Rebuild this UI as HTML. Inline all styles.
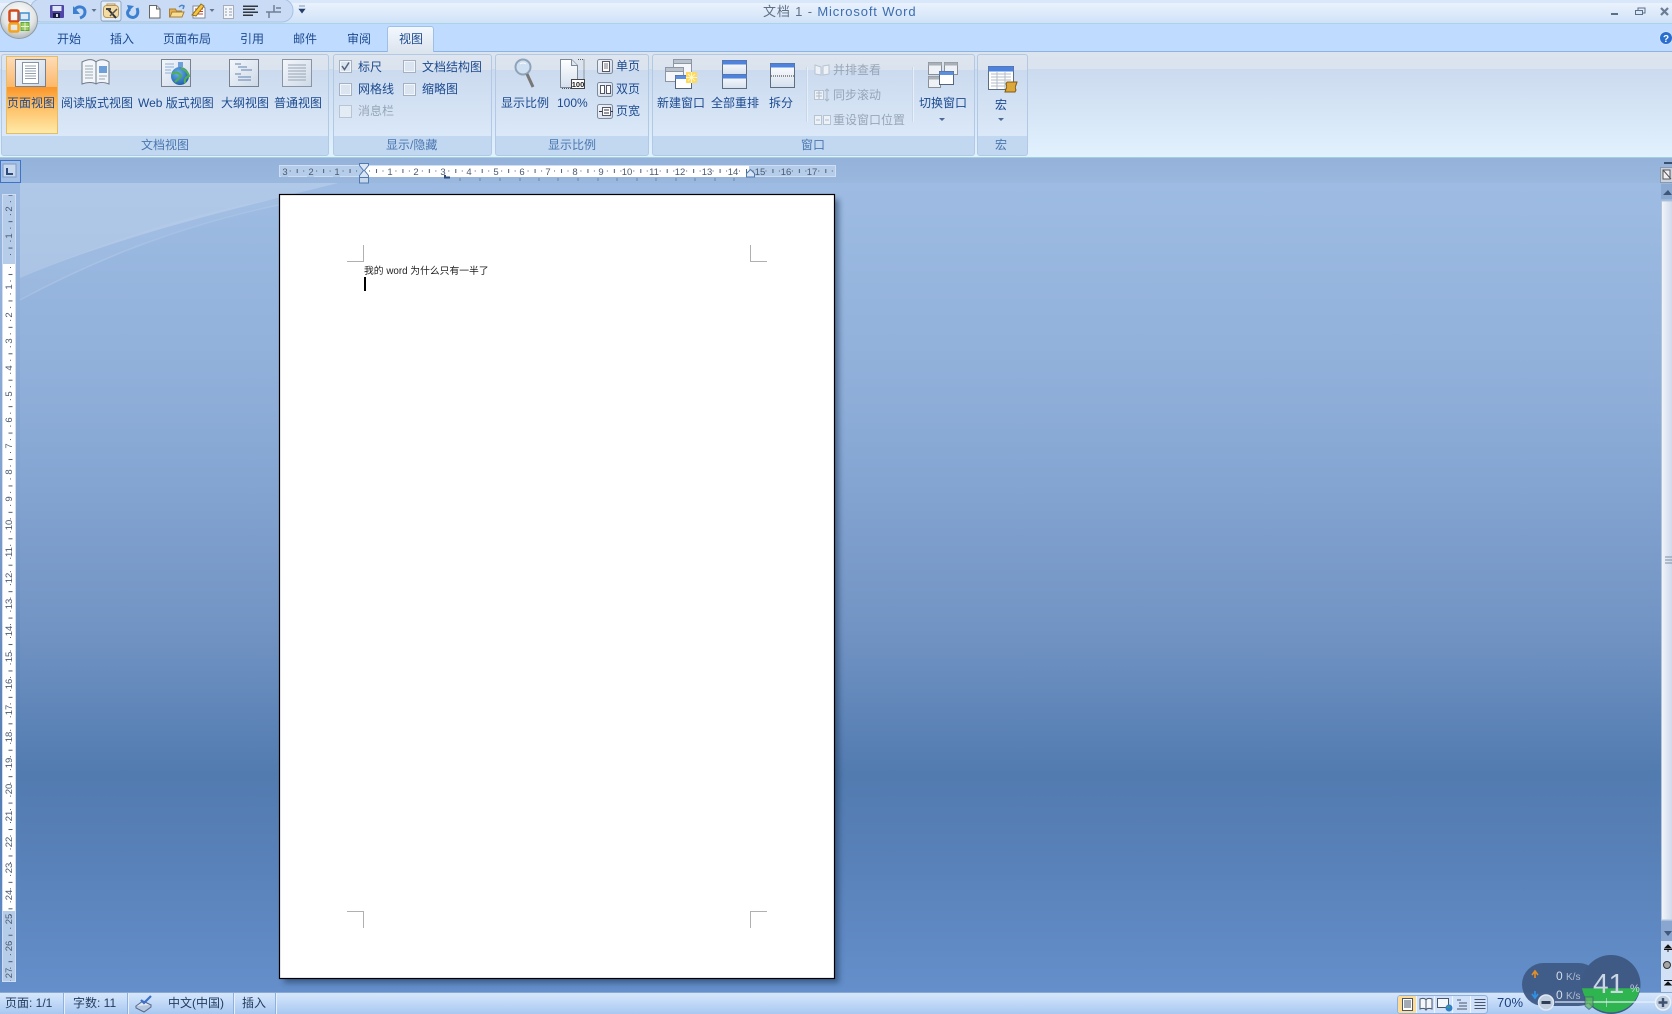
<!DOCTYPE html>
<html><head><meta charset="utf-8"><title>文档 1 - Microsoft Word</title>
<style>
html,body{margin:0;padding:0;width:1672px;height:1014px;overflow:hidden;background:#6a92c8}
div,span{position:absolute}
.t{white-space:nowrap;font:12px/14px "Liberation Sans","Noto Sans CJK SC",sans-serif;color:#1c4a90}
.g{color:#4a76b0}
.d{color:#97a5b8}
.grp{top:54px;height:100px;border:1px solid #b1c9e4;border-radius:3px;box-sizing:content-box;background:linear-gradient(#dee5ef 0,#dae3ee 15px,#cbdaee 15px,#dae8f8 81px,#c2d8f1 81px,#c2d8f1 100px)}
.s{color:#1f3a5c}
svg{position:absolute;left:0;top:0}
</style></head><body>
<div style="left:0;top:0;width:1672px;height:3px;background:#d8e7fa"></div>
<div style="left:0;top:3px;width:1672px;height:20px;background:linear-gradient(#eaf2fc,#d0e2f8)"></div>
<div style="left:0;top:23px;width:1672px;height:1px;background:#a9d3e6"></div>
<div style="left:0;top:24px;width:1672px;height:27px;background:#bfdbff"></div>
<div style="left:0;top:51px;width:1672px;height:1px;background:#8db2e3"></div>
<div style="left:0;top:52px;width:1672px;height:105px;background:linear-gradient(#dce4ee 0,#dae3ee 17px,#cbdaee 17px,#e2f1fe 100%)"></div>
<div style="left:0;top:157px;width:1672px;height:1px;background:#9fd0dc"></div>
<div style="left:0;top:158px;width:1672px;height:25px;background:linear-gradient(#94b2da,#9ab8de)"></div>
<div style="left:0;top:183px;width:1672px;height:809px;background:linear-gradient(#9ebce3 0,#8dadd8 28%,#7294c4 55%,#527bb0 73%,#5a82ba 85%,#648fca 100%)"></div>
<div style="left:0;top:183px;width:20px;height:809px;background:linear-gradient(#9bb9e0 0,#7f9fcd 40%,#527bb0 73%,#648fca 100%)"></div>
<div class="grp" style="left:1px;width:326px"></div>
<div class="grp" style="left:333px;width:157px"></div>
<div class="grp" style="left:495px;width:152px"></div>
<div class="grp" style="left:652px;width:321px"></div>
<div class="grp" style="left:977px;width:49px"></div>
<div style="left:6px;top:56px;width:50px;height:76px;border:1px solid #e3bd68;background:linear-gradient(#fddcb8 0,#fdb86a 30px,#fb9529 30px,#fdb759 45px,#ffeaa8 100%)"></div>
<div style="left:387px;top:26px;width:47px;height:26px;box-sizing:border-box;border:1px solid #9ec0e6;border-bottom:0;border-radius:3px 3px 0 0;background:linear-gradient(#f3f8fe,#dce4ee)"></div>
<div style="left:0;top:992px;width:1672px;height:22px;background:linear-gradient(#8aa9d2 0,#8aa9d2 1px,#d6e7fc 1px,#c3daf8 10px,#a8c8f0 100%)"></div>

<svg width="1672" height="1014" viewBox="0 0 1672 1014" xmlns="http://www.w3.org/2000/svg">
<defs>
<radialGradient id="orb" cx=".5" cy=".35" r=".7"><stop offset="0" stop-color="#fff"/><stop offset=".6" stop-color="#e4e6e6"/><stop offset="1" stop-color="#a8aeb0"/></radialGradient>
<linearGradient id="ic" x1="0" y1="0" x2="0" y2="1"><stop offset="0" stop-color="#fff"/><stop offset="1" stop-color="#d5e0ee"/></linearGradient>
<linearGradient id="ic2" x1="0" y1="0" x2="1" y2="1"><stop offset="0" stop-color="#f4f7fb"/><stop offset="1" stop-color="#cdd9e8"/></linearGradient>
<linearGradient id="th" x1="0" y1="0" x2="1" y2="0"><stop offset="0" stop-color="#f3f6fb"/><stop offset="1" stop-color="#cdd9ea"/></linearGradient>
<radialGradient id="globe" cx=".4" cy=".35" r=".7"><stop offset="0" stop-color="#6ab4ee"/><stop offset="1" stop-color="#1c5aa8"/></radialGradient>
<pattern id="rh" patternUnits="userSpaceOnUse" x="363" y="165" width="26.43" height="12"><rect x="6" y="5.5" width="1" height="1" fill="#4a5b74"/><rect x="13" y="4" width="1" height="4" fill="#4a5b74"/><rect x="19.5" y="5.5" width="1" height="1" fill="#4a5b74"/></pattern>
<pattern id="rv" patternUnits="userSpaceOnUse" x="2" y="261" width="13" height="26.43"><rect x="8" y="6" width="1" height="1" fill="#4a5b74"/><rect x="6.5" y="13" width="4" height="1" fill="#4a5b74"/><rect x="8" y="19.5" width="1" height="1" fill="#4a5b74"/></pattern>
<filter id="sh" x="-5%" y="-5%" width="110%" height="110%"><feGaussianBlur stdDeviation="3"/></filter>
</defs>

<!-- background swoosh -->
<path d="M20 183H338C250 205 120 235 20 278Z" fill="#fff" opacity=".2"/>
<path d="M20 278C120 235 200 212 279 198V205C180 222 90 265 20 300Z" fill="#fff" opacity=".05"/>
<path d="M20 300C90 262 180 225 279 205" fill="none" stroke="#fff" stroke-opacity=".12" stroke-width="1.5"/>

<!-- QAT -->
<rect x="30" y="-1" width="263" height="23" rx="11" fill="#cadcf5" stroke="#a7c2e5"/>
<circle cx="19" cy="20" r="18.5" fill="url(#orb)" stroke="#8f9aa3"/>
<rect x="9.500" y="10.500" width="9" height="11" rx="1.500" fill="none" stroke="#d5491a" stroke-width="2.500"/>
<rect x="20" y="13" width="9" height="7" fill="#dfeaf5" stroke="#3f8fd0" stroke-width="1.500"/>
<rect x="9.500" y="23.500" width="9" height="8" rx="1.500" fill="none" stroke="#f4a31c" stroke-width="2.500"/>
<rect x="21" y="22.500" width="8" height="8" fill="#9bcb58" stroke="#5fa53a"/>
<path d="M25 22.500v8M21 26.500h8" stroke="#e8f3da"/>
<!-- save -->
<rect x="50" y="5" width="14" height="13" rx="1" fill="#4f45a8"/><rect x="52.500" y="6" width="9" height="5" fill="#dfe6f5"/><rect x="53" y="13" width="7" height="5" fill="#1b1b3a"/><rect x="56" y="14" width="2" height="3" fill="#cfd6e8"/>
<!-- undo -->
<path d="M75 9C79 5 85 7 85 12C85 15 83 17 80 18" fill="none" stroke="#3b7fd0" stroke-width="3"/><path d="M73 6v8h7z" fill="#3b7fd0"/>
<path d="M91.500 9h5l-2.500 3z" fill="#62758f"/>
<!-- hover tools -->
<rect x="101" y="1" width="20" height="20" rx="2" fill="#e3edf9" stroke="#8ea6c4"/>
<rect x="103.500" y="5.500" width="15" height="12" rx="3" fill="#f3dba2" stroke="#b69658"/><path d="M107 5.500V4h8v1.500" fill="none" stroke="#b69658"/>
<path d="M108 9l8 9" stroke="#333" stroke-width="2"/><path d="M117 9l-7 7" stroke="#555" stroke-width="1.500"/><path d="M106 8h5v2h-5z" fill="#444"/>
<!-- redo -->
<path d="M130 9C126 12 127 17 133 17.500C137 17 139 13 137 8" fill="none" stroke="#3b7fd0" stroke-width="3"/><path d="M127 5l7 1-5 5z" fill="#3b7fd0"/>
<!-- new doc -->
<path d="M149.500 5.500h7l3.500 3.500v9h-10.500z" fill="#fff" stroke="#666"/><path d="M156.500 5.500v3.500h3.500" fill="#ddd" stroke="#666"/>
<!-- open -->
<path d="M169.500 9h6l1 2h5v6h-12z" fill="#e8b24c" stroke="#a67f38"/><path d="M170 17l2-5h12l-2 5z" fill="#f8dc90" stroke="#a67f38"/><path d="M179 7c2-2 3-2 5-1l-1 3" fill="none" stroke="#4a86c8" stroke-width="1.500"/>
<!-- spell -->
<path d="M193 6h10l2 2v10h-12z" fill="#fff" stroke="#7f8aa0"/><path d="M195 9h8M195 11.500h8M195 14h8" stroke="#d03e2a"/><path d="M192 15l9-11 3 2-8 10z" fill="#f6c63c" stroke="#917022"/>
<path d="M209.500 9h5l-2.500 3z" fill="#62758f"/>
<!-- form -->
<rect x="223.500" y="5.500" width="10" height="13" fill="#f4f6f8" stroke="#a6adb8"/><path d="M225 9h2M229 9h3M225 12h2M229 12h3M225 15h2M229 15h3" stroke="#8ea0b6"/>
<!-- align -->
<path d="M243 6h15M243 9h12M243 12h15M243 15h10" stroke="#000" stroke-width="1.200" transform="translate(0 .2)"/>
<!-- table -->
<path d="M274 5v7M266 12h15M274 12h-5v6M276 8h5" fill="none" stroke="#6f7f93" stroke-width="1.500"/>
<path d="M299 6h6M299 9h6l-3 4z" fill="#23406c" stroke="#23406c" stroke-width=".6"/>

<!-- window controls -->
<rect x="1611" y="13" width="7" height="2" fill="#5c6f88"/>
<rect x="1638" y="8" width="7" height="5" fill="none" stroke="#5c6f88"/><rect x="1635.500" y="10.500" width="7" height="4" fill="#dbe7f8" stroke="#5c6f88"/>
<path d="M1661 8l7 7M1668 8l-7 7" stroke="#6b7d95" stroke-width="2.200"/>
<circle cx="1666" cy="38" r="6.500" fill="#2a6fd0" stroke="#cfe2f8"/>
<text x="1666" y="42" font-family="Liberation Sans" font-size="10" font-weight="bold" fill="#fff" text-anchor="middle">?</text>

<!-- view icons -->
<g id="v1"><rect x="15.500" y="59.500" width="30" height="27" fill="url(#ic2)" stroke="#77818f"/><rect x="22.500" y="62.500" width="16" height="21" fill="#fff" stroke="#8593a5"/><path d="M25 66h11M25 68.500h11M25 71h11M25 73.500h11M25 76h11M25 78.500h11" stroke="#93a0b0"/></g>
<path d="M82 62c6-3 11-3 14 0c3-3 9-3 13 0v22c-5-2-10-2-13 0c-3-2-9-2-14 0z" fill="#f2f5f9" stroke="#6f7b8a"/><path d="M96 62v22" stroke="#6f7b8a"/><path d="M85 66h8M85 69h8M85 72h8M85 75h8M85 78h8" stroke="#9aa6b4"/><rect x="99" y="66" width="8" height="7" fill="#6e9fd8"/><path d="M99 76h8M99 79h6" stroke="#9aa6b4"/>
<rect x="161.500" y="59.500" width="29" height="27" fill="url(#ic2)" stroke="#77818f"/><path d="M165 64h9M165 67h9M165 70h6M165 73h6" stroke="#8eb0d8"/><rect x="178" y="62" width="5" height="5" fill="#6e9fd8"/><circle cx="180" cy="76" r="9" fill="url(#globe)"/><path d="M172 74c4-3 7-1 9 2c-2 3-5 5-6 6M181 68c3 1 7 4 8 8c-3 1-5 4-4 7" fill="none" stroke="#4fb04c" stroke-width="2"/>
<rect x="229.500" y="59.500" width="29" height="27" fill="url(#ic2)" stroke="#77818f"/><path d="M235 64h6M238 67h9M241 70h11M235 74h6M238 77h13M238 80h13" stroke="#6283ae"/>
<rect x="282.500" y="59.500" width="29" height="27" fill="url(#ic2)" stroke="#8a94a2"/><path d="M288 65h18M288 68h18M288 71h18M288 74h18M288 77h18M288 80h18" stroke="#98a4b3"/>

<!-- checkboxes -->
<g fill="#dbe5f1" stroke="#a3b1c2"><rect x="339.500" y="60.500" width="12" height="12"/><rect x="339.500" y="83.500" width="12" height="12"/><rect x="403.500" y="60.500" width="12" height="12"/><rect x="403.500" y="83.500" width="12" height="12"/></g>
<g fill="none" stroke="#f2f6fb"><rect x="340.500" y="61.500" width="10" height="10"/><rect x="340.500" y="84.500" width="10" height="10"/><rect x="404.500" y="61.500" width="10" height="10"/><rect x="404.500" y="84.500" width="10" height="10"/></g>
<rect x="339.500" y="105.500" width="12" height="12" fill="#e3ebf5" stroke="#b8c4d2"/>
<path d="M342 66l2.500 3.500L349 62.500" fill="none" stroke="#55647a" stroke-width="1.500"/>

<!-- zoom icons -->
<circle cx="523" cy="67" r="7.500" fill="#cfe0f2" stroke="#8ea3ba" stroke-width="2"/><path d="M520 64a5 5 0 0 1 6 0" fill="none" stroke="#fff"/><path d="M527 74l6 13" stroke="#777" stroke-width="3"/>
<path d="M560.500 59.500h11l6 6v22h-17z" fill="url(#ic)" stroke="#7b8898"/><path d="M571.500 59.500v6h6" fill="#dde5ee" stroke="#7b8898"/><path d="M578 59.500h6v29h-22" fill="none" stroke="#555" stroke-dasharray="1 1"/>
<rect x="571.500" y="79.500" width="13" height="9" fill="#fff" stroke="#444"/>
<text x="578" y="87" font-family="Liberation Sans" font-size="7.500" font-weight="bold" fill="#222" text-anchor="middle">100</text>
<g fill="url(#ic2)" stroke="#7d8b9d"><rect x="597.500" y="59.500" width="15" height="14" rx="2"/><rect x="597.500" y="82.500" width="15" height="14" rx="2"/><rect x="597.500" y="104.500" width="15" height="14" rx="2"/></g>
<rect x="602.500" y="61.500" width="7" height="10" fill="#fff" stroke="#556"/><path d="M604 64h4M604 66h4M604 68h4" stroke="#778"/>
<rect x="600.500" y="85.500" width="4" height="8" fill="#fff" stroke="#556"/><rect x="606.500" y="85.500" width="4" height="8" fill="#fff" stroke="#556"/>
<rect x="602.500" y="107.500" width="8" height="8" fill="#fff" stroke="#556"/><path d="M599 111.500h3M611 111.500h2M604 110h5M604 113h5" stroke="#334"/>

<!-- new window -->
<rect x="673.500" y="59.500" width="18" height="21" fill="#f4f6f9" stroke="#8d97a4"/><rect x="673.500" y="59.500" width="18" height="4" fill="#b9c2cd" stroke="#8d97a4"/>
<rect x="665.500" y="67.500" width="18" height="14" fill="#f4f6f9" stroke="#8d97a4"/><rect x="665.500" y="67.500" width="18" height="4" fill="#b9c2cd" stroke="#8d97a4"/>
<rect x="675.500" y="75.500" width="16" height="13" fill="#fff" stroke="#54657d"/><rect x="675.500" y="75.500" width="16" height="3.500" fill="#5c8fe0"/>
<rect x="686" y="72" width="11" height="11" fill="#ffd95e"/><path d="M691.500 72v11M686 77.500h11M688 74l7 7M695 74l-7 7" stroke="#fff6c8"/>
<!-- arrange -->
<rect x="722.500" y="60.500" width="24" height="14" fill="url(#ic)" stroke="#5d6d82"/><rect x="722.500" y="60.500" width="24" height="4" fill="#4d83df"/>
<rect x="722.500" y="74.500" width="24" height="14" fill="url(#ic)" stroke="#5d6d82"/><rect x="722.500" y="74.500" width="24" height="4" fill="#4d83df"/>
<!-- split -->
<rect x="770.500" y="63.500" width="24" height="24" fill="url(#ic)" stroke="#5d6d82"/><rect x="770.500" y="63.500" width="24" height="4" fill="#4d83df"/><path d="M771 76h23" stroke="#333" stroke-dasharray="1 1"/>
<!-- seps -->
<path d="M807 67v55M913 67v55" stroke="#f4f8fd" stroke-width="1.200"/><path d="M806.300 67v55M912.300 67v55" stroke="#a9bfda" stroke-width=".6"/>
<g fill="#edf2f8" stroke="#b8c3d0"><path d="M815 65l6 2v8l-6-1z"/><path d="M823 66l6-1v9l-6 1z"/><rect x="814.500" y="90.500" width="9" height="9"/><rect x="814.500" y="115.500" width="7" height="9"/><rect x="823.500" y="115.500" width="7" height="9"/></g>
<path d="M827 89v12M825 91l2-2 2 2M825 99l2 2 2-2" fill="none" stroke="#aab6c4"/>
<path d="M816 93h6M816 96h6M819 91v8M816 120h4M825 120h4" stroke="#b0bcca"/>
<!-- switch -->
<rect x="928.500" y="62.500" width="13" height="12" fill="#eef1f5" stroke="#8a8f96"/><rect x="928.500" y="62.500" width="13" height="3" fill="#aab0b8"/>
<rect x="944.500" y="62.500" width="13" height="12" fill="#eef1f5" stroke="#8a8f96"/><rect x="944.500" y="62.500" width="13" height="3" fill="#aab0b8"/>
<rect x="928.500" y="76.500" width="12" height="11" fill="#eef1f5" stroke="#8a8f96"/><rect x="928.500" y="76.500" width="12" height="3" fill="#aab0b8"/>
<rect x="939.500" y="71.500" width="14" height="13" fill="#fff" stroke="#54657d"/><rect x="939.500" y="71.500" width="14" height="3.500" fill="#5c8fe0"/>
<path d="M939 118h6l-3 3zM998 118h6l-3 3z" fill="#4d6a92"/>
<!-- macro -->
<rect x="988.500" y="66.500" width="25" height="23" fill="#fff" stroke="#5d6d82"/><rect x="988.500" y="66.500" width="25" height="5" fill="#4d83df"/>
<path d="M991 74h20M991 77h20M991 80h20M991 83h20M991 86h20M997 72v17M1005 72v17" stroke="#b3bdca"/>
<path d="M1007 82h10l-1 3c-1 2-1 3 0 5l-1 2h-10l1-3c1-2 1-3 0-5z" fill="#dca83a" stroke="#7e5a16"/>

<!-- corner tab -->
<rect x=".5" y="160.500" width="20" height="22" fill="#a3bfe5" stroke="#3f73c7"/><rect x="3" y="164" width="13" height="13" fill="#c8d9ef" stroke="#7d9cc5"/><path d="M7 168v6h6" fill="none" stroke="#2c4a7a" stroke-width="2"/>

<!-- h ruler -->
<rect x="279.500" y="165.500" width="556" height="11" fill="#b6cde9" stroke="#cfdef2"/>
<rect x="363" y="166" width="386" height="11" fill="#fff"/>
<rect x="280" y="166" width="555" height="11" fill="url(#rh)"/>
<g font-family="Liberation Sans" font-size="9.500" fill="#4a5a72" text-anchor="middle">
<g><rect x="281" y="166" width="7" height="11" fill="#b6cde9"/><rect x="307" y="166" width="7" height="11" fill="#b6cde9"/><rect x="333" y="166" width="7" height="11" fill="#b6cde9"/></g>
<text x="285" y="175">3</text><text x="311" y="175">2</text><text x="337" y="175">1</text>
<text x="390" y="175">1</text><text x="416" y="175">2</text><text x="443" y="175">3</text><text x="469" y="175">4</text><text x="496" y="175">5</text><text x="522" y="175">6</text><text x="548" y="175">7</text><text x="575" y="175">8</text><text x="601" y="175">9</text><text x="627" y="175">10</text><text x="654" y="175">11</text><text x="680" y="175">12</text><text x="707" y="175">13</text><text x="733" y="175">14</text><text x="760" y="175">15</text><text x="786" y="175">16</text><text x="812" y="175">17</text></g>
<path d="M460 178v3M480 178v3M500 178v3M520 178v3M539 178v3M558 178v3M578 178v3M598 178v3M617 178v3M637 178v3M656 178v3M676 178v3M695 178v3M715 178v3M734 178v3" stroke="#6f86a6"/>
<path d="M445 175v2.500h5" fill="none" stroke="#2c4a7a" stroke-width="2"/>
<path d="M359.500 163.500h9v2l-4 5 4 5v2h-9v-2l4-5-4-5z" fill="#dbe6f5" stroke="#4f79b0"/>
<rect x="359.500" y="177.500" width="9" height="5.500" fill="#c6d6ea" stroke="#4f79b0"/>
<path d="M750.500 169.500l4 4v3.500h-8v-3.500z" fill="#dbe6f5" stroke="#4f79b0"/>

<!-- v ruler -->
<rect x="2.500" y="194.500" width="13" height="787" fill="#b6cde9" stroke="#cfdef2"/>
<rect x="3" y="264" width="12" height="647" fill="#fff"/>
<rect x="3" y="195" width="12" height="786" fill="url(#rv)"/>
<g font-family="Liberation Sans" font-size="9.500" fill="#4a5a72" text-anchor="middle">
<text transform="translate(12 209) rotate(-90)">2</text><text transform="translate(12 236) rotate(-90)">1</text>
<text transform="translate(12 287) rotate(-90)">1</text><text transform="translate(12 315) rotate(-90)">2</text><text transform="translate(12 341) rotate(-90)">3</text><text transform="translate(12 368) rotate(-90)">4</text><text transform="translate(12 394) rotate(-90)">5</text><text transform="translate(12 420) rotate(-90)">6</text><text transform="translate(12 446) rotate(-90)">7</text><text transform="translate(12 472) rotate(-90)">8</text><text transform="translate(12 499) rotate(-90)">9</text><text transform="translate(12 525) rotate(-90)">10</text><text transform="translate(12 552) rotate(-90)">11</text><text transform="translate(12 578) rotate(-90)">12</text><text transform="translate(12 604) rotate(-90)">13</text><text transform="translate(12 631) rotate(-90)">14</text><text transform="translate(12 657) rotate(-90)">15</text><text transform="translate(12 684) rotate(-90)">16</text><text transform="translate(12 710) rotate(-90)">17</text><text transform="translate(12 737) rotate(-90)">18</text><text transform="translate(12 763) rotate(-90)">19</text><text transform="translate(12 789) rotate(-90)">20</text><text transform="translate(12 816) rotate(-90)">21</text><text transform="translate(12 842) rotate(-90)">22</text><text transform="translate(12 868) rotate(-90)">23</text><text transform="translate(12 895) rotate(-90)">24</text><text transform="translate(12 919) rotate(-90)">25</text><text transform="translate(12 946) rotate(-90)">26</text><text transform="translate(12 973) rotate(-90)">27</text></g>

<!-- page -->
<rect x="284" y="199" width="555" height="784" fill="#1d3557" opacity=".55" filter="url(#sh)"/>
<rect x="279.500" y="194.500" width="555" height="784" fill="#fff" stroke="#000" stroke-width="1.200"/>
<path d="M363.500 245v16.500H347M750.500 245v16.500H767M347 911.500h16.500V928M767 911.500h-16.500V928" fill="none" stroke="#b0b0b0"/>
<rect x="364" y="277" width="2" height="14" fill="#000"/>

<!-- scrollbar -->
<rect x="1661" y="168" width="11" height="824" fill="#9ab8de"/>
<rect x="1664" y="162" width="8" height="2" fill="#3a5170"/>
<rect x="1660.500" y="167.500" width="12" height="15" fill="#c9d2de" stroke="#8c99a8"/><rect x="1663" y="170" width="7" height="9" fill="#f3eef3" stroke="#555"/><path d="M1663 170l8 9" stroke="#555"/>
<rect x="1661" y="184" width="11" height="15" fill="#8ca9d2"/><path d="M1663 195l5-5 4 5z" fill="#3f5777"/>
<rect x="1661.500" y="201" width="11" height="719" fill="url(#th)" stroke="#b2c3da"/>
<path d="M1665 557h7M1665 560h7M1665 563h7" stroke="#7e8fa6"/>
<rect x="1661" y="921" width="11" height="20" fill="#88a6cf"/><path d="M1664 931h8l-4 5z" fill="#40587a"/>
<rect x="1661" y="941" width="11" height="51" fill="#d2e1f6"/>
<path d="M1668 945l-3 3h6zM1664 949.500h8M1668 950v2" stroke="#111" fill="#111"/>
<circle cx="1667" cy="965" r="3.500" fill="#a5a5a5" stroke="#333"/>
<path d="M1664 980.500h8M1668 982l-3 3h6z" stroke="#111" fill="#111"/>

<!-- spell icon on status -->
<path d="M136 1006l7-5 8 4-7 5z" fill="#dfe8f5" stroke="#55688a"/><path d="M136 1006v2l8 4 7-5v-2" fill="#b7c7de" stroke="#55688a"/><path d="M141 1000l3 3 7-7" fill="none" stroke="#3c70c8" stroke-width="2.200"/>
<path d="M63.500 993v21M127.500 993v21M233.500 993v21M275.500 993v21" stroke="#8fb0da"/><path d="M64.500 993v21M128.500 993v21M234.500 993v21M276.500 993v21" stroke="#e6f0fd"/>

<!-- view switch -->
<rect x="1397.500" y="995.500" width="90" height="18" rx="3" fill="#cfe1f9" stroke="#8fb0dc"/>
<rect x="1398" y="996" width="18" height="17" rx="2" fill="#fddb94"/>
<path d="M1416.500 996v17M1434.500 996v17M1452.500 996v17M1470.500 996v17" stroke="#eef5fe"/>
<rect x="1402.500" y="998.500" width="10" height="12" fill="#fff" stroke="#48556a"/><path d="M1404 1001h7M1404 1003h7M1404 1005h7M1404 1007h7" stroke="#48556a"/>
<path d="M1420 999c3-1 5-1 6 1c1-2 3-2 6-1v10c-3-1-5-1-6 1c-1-2-3-2-6-1zM1426 1000v10" fill="#f3f6fa" stroke="#48556a"/>
<rect x="1437.500" y="998.500" width="11" height="9" fill="#f3f6fa" stroke="#48556a"/><circle cx="1449" cy="1008" r="3.500" fill="#2f80c9"/><path d="M1447 1007h3" stroke="#56ad52"/>
<path d="M1457 1000h4M1459 1003h8M1459 1006h8M1457 1009h10" stroke="#48556a"/>
<path d="M1474.500 999.500h11M1474.500 1002.500h11M1474.500 1005.500h11M1474.500 1008.500h11" stroke="#48556a"/>

<!-- widget -->
<rect x="1522" y="963" width="78" height="43" rx="21.500" fill="#3e5a85" fill-opacity=".96"/>
<circle cx="1611" cy="984.500" r="29.500" fill="#3e5a85"/>
<path d="M1582 988.300H1640A29.500 29.500 0 0 1 1582 988.300Z" fill="#2fb54f"/>
<path d="M1535 978v-6M1532 975l3-4 3 4" fill="none" stroke="#e28f27" stroke-width="1.600"/>
<path d="M1535 991v6M1532 994l3 4 3-4" fill="none" stroke="#2e93e8" stroke-width="1.600"/>
<!-- zoom slider -->
<rect x="1555" y="1001" width="100" height="2" fill="#e9f1fc" opacity=".6"/>
<rect x="1606" y="998" width="1" height="9" fill="#e9f1fc" opacity=".5"/>
<path d="M1585 997h8v9l-4 3.500-4-3.500z" fill="#5cb45f" fill-opacity=".75" stroke="#38507a" stroke-opacity=".6"/>
<circle cx="1546" cy="1002.500" r="7.500" fill="#c0cee0" stroke="#dfe9f6" stroke-width="1.500"/><rect x="1541.500" y="1001" width="9" height="3" fill="#2f3f55"/>
<circle cx="1663" cy="1002.500" r="7.500" fill="#c0cee0" stroke="#e9f1fb" stroke-width="1.500"/><path d="M1658.500 1002.500h9M1663 998v9" stroke="#3d516e" stroke-width="2.400"/>
</svg>

<span class="t" style="left:763px;top:4px;font-size:13px;line-height:16px;color:#5f6f84;letter-spacing:.85px">文档 1 - <span style="position:static;color:#3c6db0">Microsoft Word</span></span>
<span class="t" style="left:57px;top:32px">开始</span>
<span class="t" style="left:110px;top:32px">插入</span>
<span class="t" style="left:163px;top:32px">页面布局</span>
<span class="t" style="left:240px;top:32px">引用</span>
<span class="t" style="left:293px;top:32px">邮件</span>
<span class="t" style="left:347px;top:32px">审阅</span>
<span class="t" style="left:399px;top:32px">视图</span>

<span class="t" style="left:7px;top:96px">页面视图</span>
<span class="t" style="left:61px;top:96px">阅读版式视图</span>
<span class="t" style="left:138px;top:96px">Web 版式视图</span>
<span class="t" style="left:221px;top:96px">大纲视图</span>
<span class="t" style="left:274px;top:96px">普通视图</span>
<span class="t g" style="left:141px;top:138px">文档视图</span>

<span class="t" style="left:358px;top:60px">标尺</span>
<span class="t" style="left:358px;top:82px">网格线</span>
<span class="t d" style="left:358px;top:104px">消息栏</span>
<span class="t" style="left:422px;top:60px">文档结构图</span>
<span class="t" style="left:422px;top:82px">缩略图</span>
<span class="t g" style="left:386px;top:138px">显示/隐藏</span>

<span class="t" style="left:501px;top:96px">显示比例</span>
<span class="t" style="left:557px;top:96px">100%</span>
<span class="t" style="left:616px;top:59px">单页</span>
<span class="t" style="left:616px;top:82px">双页</span>
<span class="t" style="left:616px;top:104px">页宽</span>
<span class="t g" style="left:548px;top:138px">显示比例</span>

<span class="t" style="left:657px;top:96px">新建窗口</span>
<span class="t" style="left:711px;top:96px">全部重排</span>
<span class="t" style="left:769px;top:96px">拆分</span>
<span class="t d" style="left:833px;top:63px">并排查看</span>
<span class="t d" style="left:833px;top:88px">同步滚动</span>
<span class="t d" style="left:833px;top:113px">重设窗口位置</span>
<span class="t" style="left:919px;top:96px">切换窗口</span>
<span class="t g" style="left:801px;top:138px">窗口</span>
<span class="t" style="left:995px;top:98px">宏</span>
<span class="t g" style="left:995px;top:138px">宏</span>

<span class="t" style="left:364px;top:265px;font-size:9.800px;color:#222">我的 word 为什么只有一半了</span>

<span class="t s" style="left:5px;top:996px">页面: 1/1</span>
<span class="t s" style="left:73px;top:996px">字数: 11</span>
<span class="t s" style="left:168px;top:996px">中文(中国)</span>
<span class="t s" style="left:242px;top:996px">插入</span>
<span class="t" style="left:1497px;top:996px;font-size:13px;color:#1c3f80">70%</span>

<span class="t" style="left:1556px;top:969px;font-size:12px;color:#d5deea">0 <span style="position:static;font-size:10px;color:#aebccf">K/s</span></span>
<span class="t" style="left:1556px;top:988px;font-size:12px;color:#d5deea">0 <span style="position:static;font-size:10px;color:#aebccf">K/s</span></span>
<span class="t" style="left:1593px;top:968px;font-size:28px;line-height:32px;color:#ccd6e4">41</span>
<span class="t" style="left:1630px;top:982px;font-size:11px;color:#ccd6e4">%</span>
</body></html>
